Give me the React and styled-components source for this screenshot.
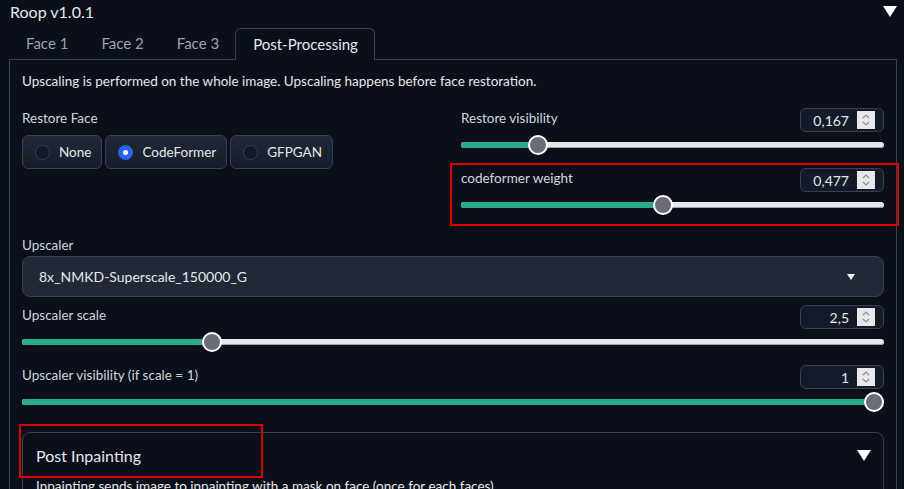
import React from 'react';
import styled, { createGlobalStyle, css } from 'styled-components';

const bg = '#0b0f19';
const border = '#374151';
const text = '#e5e7eb';
const muted = '#9ca3af';
const teal = '#2aab8b';

const GlobalStyle = createGlobalStyle`
  body {
    margin: 0;
    background: ${bg};
    color: ${text};
    font-family: Lato, "Noto Sans", sans-serif;
    overflow: hidden;
  }
`;

const Page = styled.div`
  width: 904px;
  height: 489px;
  overflow: hidden;
`;

const Header = styled.div`
  display: flex;
  justify-content: space-between;
  align-items: center;
  height: 22px;
  padding: 0 7px 0 10px;
  font-size: 16px;
`;

const Caret = styled.span`
  width: 0;
  height: 0;
  border-left: ${p => p.size}px solid transparent;
  border-right: ${p => p.size}px solid transparent;
  border-top: ${p => p.size * 1.6}px solid #fff;
`;

const TabBar = styled.div`
  display: flex;
  align-items: flex-end;
  margin: 6px 7px 0 9px;
  border-bottom: 1px solid ${border};
  height: 31px;
`;

const Tab = styled.div`
  padding: 0 16px 0 17px;
  height: 31px;
  line-height: 31px;
  font-size: 15px;
  color: ${muted};
  box-sizing: border-box;
  ${p => p.active && css`
    color: ${text};
    border: 1px solid ${border};
    border-bottom: none;
    border-radius: 6px 6px 0 0;
    background: ${bg};
    height: 32px;
    margin-bottom: -1px;
  `}
`;

const Panel = styled.div`
  margin: 0 7px 0 9px;
  border: 1px solid ${border};
  border-top: none;
  padding: 12px 12px 0 12px;
  height: 440px;
`;

const Note = styled.div`
  font-size: 13.5px;
  line-height: 18px;
`;

const Columns = styled.div`
  display: grid;
  grid-template-columns: 1fr 423px;
  column-gap: 14px;
  margin-top: 18px;
`;

const Column = styled.div`
  display: flex;
  flex-direction: column;
  gap: 13px;
  margin-top: ${p => p.top || 0}px;
`;

const Label = styled.div`
  font-size: 13.5px;
  color: #d1d5db;
  line-height: 20px;
`;

const RadioRow = styled.div`
  display: flex;
  gap: 3px;
  margin-top: 7px;
`;

const RadioItem = styled.div`
  display: flex;
  align-items: center;
  gap: 9px;
  height: 34px;
  box-sizing: border-box;
  padding: 0 10px 0 12px;
  border: 1px solid ${border};
  border-radius: 6px;
  background: linear-gradient(#1f2937, #161d2a);
  font-size: 13.5px;
  color: #e5e7eb;
`;

const RadioDot = styled.span`
  width: 15px;
  height: 15px;
  border-radius: 50%;
  box-sizing: border-box;
  border: 1px solid ${border};
  background: #111827;
  ${p => p.checked && css`
    border: 5px solid #2563eb;
    background: #fff;
  `}
`;

const SliderBlock = styled.div`
  position: relative;
  display: flex;
  flex-direction: column;
  ${p => p.marked && css`
    &::after {
      content: '';
      position: absolute;
      left: -11px;
      right: -15px;
      top: -5px;
      bottom: -11px;
      border: 2px solid #e00000;
      pointer-events: none;
    }
  `}
`;

const SliderHead = styled.div`
  display: flex;
  justify-content: space-between;
  align-items: flex-start;
  height: 24px;
`;

const NumberBox = styled.div`
  display: flex;
  align-items: center;
  justify-content: flex-end;
  gap: 8px;
  width: 84px;
  height: 24px;
  box-sizing: border-box;
  padding: 0 8px 0 6px;
  border: 1px solid ${border};
  border-radius: 6px;
  background: #141a27;
  font-size: 14px;
  color: ${text};
`;

const Spinner = styled.span`
  display: flex;
  align-items: center;
  justify-content: center;
  width: 18px;
  height: 18px;
  background: #e8e8ec;
`;

const Track = styled.div`
  position: relative;
  height: 20px;
  margin-top: 3px;
  &::before {
    content: '';
    position: absolute;
    left: 0;
    right: 0;
    top: 7px;
    height: 6px;
    border-radius: 3px;
    background: #e5e7eb;
    box-shadow: inset 0 -1px 0 #9ca3af;
  }
`;

const Fill = styled.div`
  position: absolute;
  left: 0;
  top: 7px;
  height: 6px;
  border-radius: 3px;
  background: ${teal};
`;

const Thumb = styled.div`
  position: absolute;
  top: 0;
  width: 20px;
  height: 20px;
  margin-left: -10px;
  box-sizing: border-box;
  border-radius: 50%;
  border: 2px solid #fff;
  background: #6b6b7a;
`;

const Stack = styled.div`
  display: flex;
  flex-direction: column;
  margin-top: ${p => p.top || 0}px;
`;

const Dropdown = styled.div`
  display: flex;
  justify-content: space-between;
  align-items: center;
  height: 41px;
  box-sizing: border-box;
  margin-top: 1px;
  padding: 0 28px 0 16px;
  border: 1px solid ${border};
  border-radius: 8px;
  background: #212836;
  font-size: 14px;
`;

const Accordion = styled.div`
  margin-top: 20px;
  border: 1px solid ${border};
  border-radius: 8px;
  padding: 0 12px 0 13px;
  height: 80px;
`;

const AccHead = styled.div`
  position: relative;
  display: flex;
  justify-content: space-between;
  align-items: center;
  height: 44px;
  font-size: 16px;
  &::after {
    content: '';
    position: absolute;
    left: -17px;
    top: -9px;
    width: 240px;
    height: 50px;
    border: 2px solid #e00000;
  }
`;

const AccNote = styled.div`
  margin-top: 1px;
  font-size: 13.5px;
`;

const Chevrons = () => (
  <svg width="10" height="14" viewBox="0 0 10 14">
    <path d="M2 5 L5 2 L8 5 M2 9 L5 12 L8 9" fill="none" stroke="#8a8a92" strokeWidth="1.2" />
  </svg>
);

const Slider = ({ label, value, pct, marked }) => (
  <SliderBlock marked={marked}>
    <SliderHead>
      <Label>{label}</Label>
      <NumberBox>
        {value}
        <Spinner>
          <Chevrons />
        </Spinner>
      </NumberBox>
    </SliderHead>
    <Track>
      <Fill style={{ width: `calc(10px + (100% - 20px) * ${pct})` }} />
      <Thumb style={{ left: `calc(10px + (100% - 20px) * ${pct})` }} />
    </Track>
  </SliderBlock>
);

const options = ['None', 'CodeFormer', 'GFPGAN'];

export default function App() {
  return (
    <Page>
      <GlobalStyle />
      <Header>
        <span>Roop v1.0.1</span>
        <Caret size={7} />
      </Header>
      <TabBar>
        <Tab>Face 1</Tab>
        <Tab>Face 2</Tab>
        <Tab>Face 3</Tab>
        <Tab active>Post-Processing</Tab>
      </TabBar>
      <Panel>
        <Note>Upscaling is performed on the whole image. Upscaling happens before face restoration.</Note>
        <Columns>
          <Stack>
            <Label>Restore Face</Label>
            <RadioRow>
              {options.map(o => (
                <RadioItem key={o}>
                  <RadioDot checked={o === 'CodeFormer'} />
                  {o}
                </RadioItem>
              ))}
            </RadioRow>
          </Stack>
          <Column>
            <Slider label="Restore visibility" value="0,167" pct={0.167} />
            <Slider label="codeformer weight" value="0,477" pct={0.477} marked />
          </Column>
        </Columns>
        <Stack top={20}>
          <Label>Upscaler</Label>
          <Dropdown>
            8x_NMKD-Superscale_150000_G
            <Caret size={4} />
          </Dropdown>
        </Stack>
        <Column top={8}>
          <Slider label="Upscaler scale" value="2,5" pct={1.5 / 7} />
          <Slider label="Upscaler visibility (if scale = 1)" value="1" pct={1} />
        </Column>
        <Accordion>
          <AccHead>
            Post Inpainting
            <Caret size={7} />
          </AccHead>
          <AccNote>Inpainting sends image to inpainting with a mask on face (once for each faces).</AccNote>
        </Accordion>
      </Panel>
    </Page>
  );
}
